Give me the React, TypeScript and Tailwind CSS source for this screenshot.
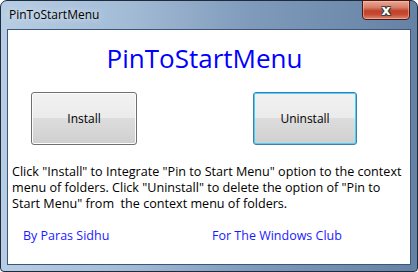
import React from "react";

export default function App() {
  const font = { fontFamily: '"Open Sans", "Noto Sans", sans-serif' };
  return (
    <div className="w-[418px] h-[272px] bg-white" style={font}>
      <div className="relative w-[418px] h-[272px] rounded-t-[7px] rounded-b-[4px] border border-[#1d2b3d] bg-[linear-gradient(90deg,#b7cde3_0%,#a3bcd6_30%,#7f9abb_60%,#6582a4_100%)] flex flex-col px-[6px] pb-[6px]">
        <div className="h-[28px] flex items-center pl-[2px] text-[12px] text-black [text-shadow:0_0_6px_rgba(255,255,255,0.9)]">
          PinToStartMenu
        </div>
        <div className="absolute top-[-1px] right-[7px] w-[48px] h-[20px] rounded-b-[4px] border border-[#4a1a12] bg-[linear-gradient(180deg,#e9a894_0%,#d9806a_35%,#c0412a_55%,#c84a31_75%,#d98a72_100%)] flex items-center justify-center shadow-[inset_0_0_0_1px_rgba(255,200,190,0.5)]">
          <span className="text-white font-bold text-[14px] leading-none [text-shadow:0_0_1px_#333,1px_1px_0_#444,-1px_-1px_0_#444,1px_-1px_0_#444,-1px_1px_0_#444]" style={{ fontFamily: '"DejaVu Sans", sans-serif' }}>x</span>
        </div>
        <div className="flex-1 border border-[#3c5677] bg-white flex flex-col">
          <div className="h-[46px] pt-[11px] text-center text-[26px] leading-[34px] text-[#0000ff] pr-[9px]">
            PinToStartMenu
          </div>
          <div className="flex mt-[16px] h-[52px]">
            <div className="ml-[23px] w-[106px] h-[53px] rounded-[3px] border border-[#707070] bg-[linear-gradient(180deg,#f2f2f2_0%,#ebebeb_49%,#dddddd_50%,#cfcfcf_100%)] shadow-[inset_0_0_0_1px_#fcfcfc] flex items-center justify-center text-[12px] text-black">
              Install
            </div>
            <div className="ml-[116px] w-[104px] h-[53px] rounded-[3px] border border-[#3c7fb1] bg-[linear-gradient(180deg,#f2f2f2_0%,#ebebeb_49%,#dddddd_50%,#cfcfcf_100%)] shadow-[inset_0_0_0_1px_#48d2f5] flex items-center justify-center text-[12px] text-black">
              Uninstall
            </div>
          </div>
          <div className="mt-[20px] ml-[4px] text-[12.6px] leading-[16px] text-black whitespace-nowrap">
            Click "Install" to Integrate "Pin to Start Menu" option to the context
            <br />
            menu of folders. Click "Uninstall" to delete the option of "Pin to
            <br />
            Start Menu" from&nbsp; the context menu of folders.
          </div>
          <div className="flex mt-[16px] text-[12.5px] leading-[16px] text-[#1a1aff]">
            <div className="ml-[15px] w-[189px]">By Paras Sidhu</div>
            <div>For The Windows Club</div>
          </div>
        </div>
      </div>
    </div>
  );
}
